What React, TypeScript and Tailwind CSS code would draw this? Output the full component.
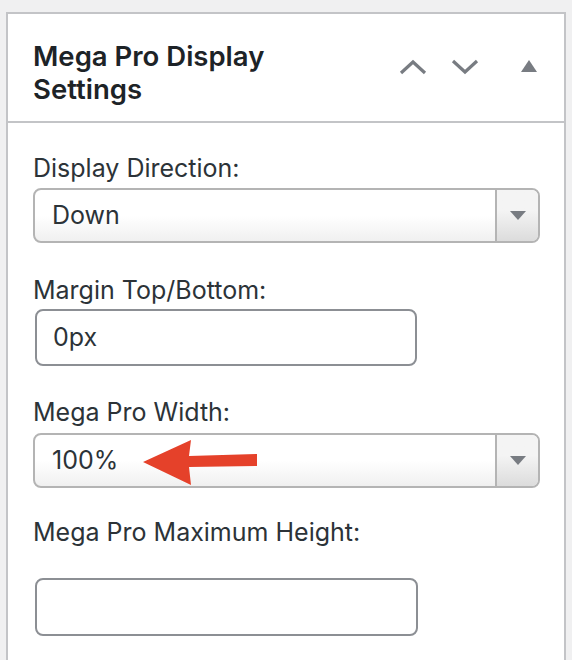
import React from 'react';

const font = { fontFamily: 'Inter, "Noto Sans", sans-serif' };

function ChevronUp() {
  return (
    <svg width="28" height="16" viewBox="0 0 28 16" fill="none">
      <path d="M2 14 L14 3 L26 14" stroke="#787c82" strokeWidth="3.2" />
    </svg>
  );
}

function ChevronDown() {
  return (
    <svg width="28" height="16" viewBox="0 0 28 16" fill="none">
      <path d="M2 2 L14 13 L26 2" stroke="#787c82" strokeWidth="3.2" />
    </svg>
  );
}

function Triangle() {
  return (
    <svg width="16" height="12" viewBox="0 0 16 12">
      <path d="M8 0 L16 12 L0 12 Z" fill="#787c82" />
    </svg>
  );
}

function Select({ value, children }: { value: string; children?: React.ReactNode }) {
  return (
    <div className="relative flex h-[55px] w-[507px] overflow-hidden rounded-[8px] border-2 border-[#b4b4b4] bg-gradient-to-b from-white from-50% to-[#f0f0f0]">
      <div className="flex flex-1 items-center pl-[17px] text-[25px] text-[#2c3338]">{value}</div>
      <div className="flex w-[43px] items-center justify-center border-l-2 border-[#b4b4b4] bg-gradient-to-b from-[#f4f4f4] from-40% to-[#dcdcdc]">
        <svg width="16" height="9" viewBox="0 0 16 9">
          <path d="M0 0 L16 0 L8 9 Z" fill="#787c82" />
        </svg>
      </div>
      {children}
    </div>
  );
}

function Arrow() {
  return (
    <svg className="absolute left-[108px] top-[3px]" width="116" height="48" viewBox="0 0 116 48">
      <path d="M0 24 L48 2 L46 18 L114 16 L114 28 L46 29 L48 47 Z" fill="#e5412a" />
    </svg>
  );
}

export default function App() {
  return (
    <div className="min-h-[660px] bg-[#f0f0f1] pl-[6px] pt-[12px]" style={font}>
      <div className="h-[660px] w-[560px] border-2 border-[#c3c4c7] bg-white">
        <div className="flex items-start border-b-2 border-[#c3c4c7] pb-[15px] pl-[25px] pt-[26px]">
          <h2 className="w-[300px] text-[27.5px] font-semibold leading-[33px] text-[#1d2327]">
            Mega Pro Display Settings
          </h2>
          <div className="ml-auto mr-[27px] mt-[19px] flex items-center">
            <ChevronUp />
            <span className="ml-[24px]"><ChevronDown /></span>
            <span className="ml-[42px] -mt-[2px]"><Triangle /></span>
          </div>
        </div>
        <div className="pl-[25px] pt-[30px] text-[#2c3338]">
          <label className="block text-[25px] leading-[30px]">Display Direction:</label>
          <div className="mt-[5px]">
            <Select value="Down" />
          </div>
          <label className="mt-[32px] block text-[25px] leading-[30px]">Margin Top/Bottom:</label>
          <div className="mt-[4px] ml-[2px] flex h-[57px] w-[382px] items-center rounded-[8px] border-2 border-[#8c8f94] px-[16px] text-[25px]">
            0px
          </div>
          <label className="mt-[31px] block text-[25px] leading-[30px]">Mega Pro Width:</label>
          <div className="mt-[6px]">
            <Select value="100%">
              <Arrow />
            </Select>
          </div>
          <label className="mt-[29px] block text-[25px] leading-[30px]">Mega Pro Maximum Height:</label>
          <div className="mt-[31px] ml-[2px] h-[58px] w-[383px] rounded-[8px] border-2 border-[#8c8f94]" />
        </div>
      </div>
    </div>
  );
}
